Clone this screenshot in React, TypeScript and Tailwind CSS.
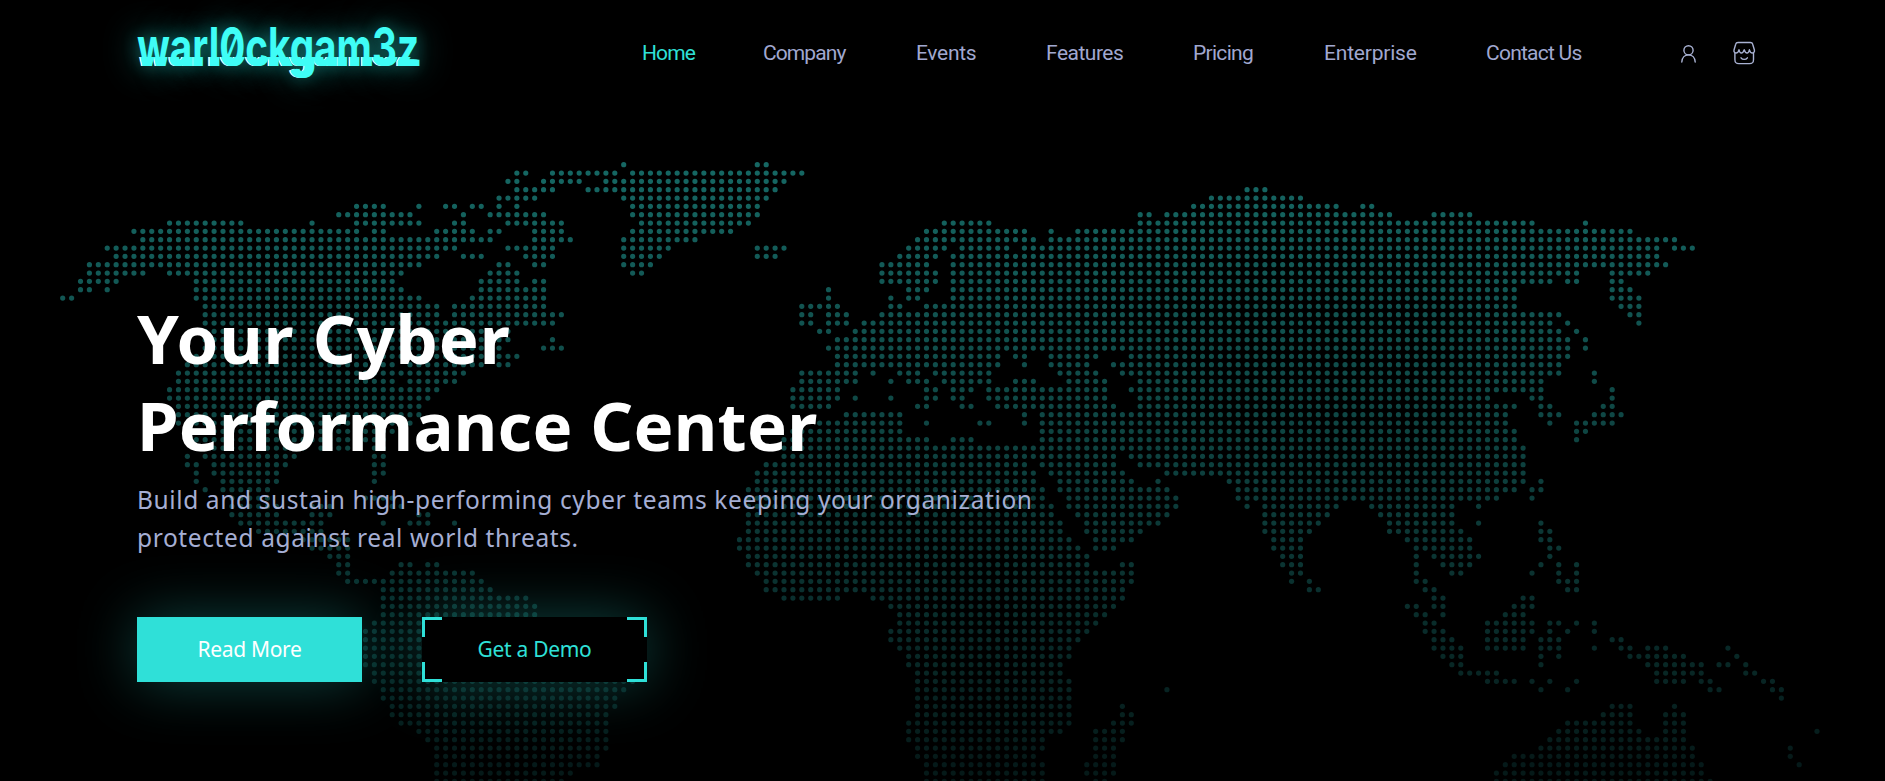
import React from "react";

/* Dotted world map: one entry per row, each a list of column runs. */
const MAP_ROWS: string[] = [
  "63 78-79",
  "51-52 55-62 64-83",
  "50-51 54-58 61-81",
  "51-55 59-80 133-135",
  "49-53 63-79 129-139",
  "33-36 40 43-44 46-47 49 51 64-78 127-143 146-147",
  "31-39 45 48-54 64-78 121-122 124-149 154-158",
  "12-20 28 33-40 44-45 50-56 65-77 99-104 121-165 171",
  "8-33 35-36 42-46 48-49 53-56 64-75 97-108 111 114-176",
  "9-48 53-57 63-71 96-109 111-181",
  "5-44 50-55 63-68 78-81 95-99 101-106 108-179 181-183",
  "6-42 45-47 52-55 63-67 78-80 94-98 100-179",
  "3-40 49-50 53-54 63-66 92-97 100-180",
  "3-9 12-38 48-51 64-65 92-98 100-170 174-178",
  "2-6 15-37 47-51 53-54 92-98 100-167 169-170 174-175",
  "2-3 5 15-38 47-54 86 95-97 100-163 174-176",
  "0-1 15-40 46-54 86 93 95-96 100-163 174-177",
  "16-42 44-54 83-87 93-94 97-163 175-177",
  "16-42 44-56 83-84 86-88 92-168 176-177",
  "16-55 83-84 86-88 90-167 169 177",
  "16-50 85-86 89-168 170",
  "16-50 55 87-169 171",
  "16-49 54-56 86-169 171",
  "15-47 49-51 87-105 107-108 111-116 120-169",
  "14-37 39-47 49-50 87-105 108 111-115 118-168",
  "13-45 83-89 91 94-96 98-104 112-116 119-168 172",
  "13-37 39-44 83-89 93 95-97 99-104 107-109 113-117 121-166 172",
  "12-42 82-87 97-98 100-102 104-117 120-166 174",
  "12-41 82-87 89 93 97-98 100-101 104-117 121-160 165-166 174",
  "13-40 82-86 96-97 101-102 105-118 121-163 166-167 173-174",
  "13-40 88-94 108 110-162 166-168 172-175",
  "13-39 85-94 97 103-104 108 110-162 167 170-174",
  "15-37 82-94 110-163 170-171",
  "15-36 81-97 100-102 110-163 170",
  "15-27 29-32 35-36 81-164",
  "14 16-26 35-36 81-118 120-164",
  "14-15 17-25 35-36 79-108 110-118 121-164",
  "15 17-24 35-36 78-109 111-119 124-164",
  "15 18-24 35 78-109 112-120 123 131-164 166",
  "16 18-23 77-110 112-124 132-163 165-166",
  "19-23 34-37 77-110 113-125 132-161 165",
  "19-24 28-30 37-38 77-111 113-125 133 135-143 147-156 159",
  "19-24 28-30 40-41 77-111 114-124 135-142 148-156",
  "20-29 36 39-41 44 77-112 115-123 135-141 149-156 159 166",
  "22-29 77-112 115-121 135-140 149-157 166-167",
  "27-32 76-113 116-120 136-139 151-158 166-167",
  "28-32 76-114 116-118 136-139 152-158 167-168",
  "30-32 77-115 137-139 152 154-159 167",
  "31-32 38-39 41-42 77-115 119-120 137-139 152 155-158 166 168 170",
  "31-32 37-46 78-120 138-139 152 156-157 165 168 170",
  "32-47 79-120 138 140 152-153 168-170",
  "36-48 79-119 140-141 153-154 169-170",
  "36-52 81-87 91-119 154-155 164-165",
  "36-53 93-118 151-152 154-155 163-165",
  "36-53 94-117 152-153 155 162-164",
  "35-57 94-116 153-154 160-165 167-168 170 172",
  "34-60 93-115 153-155 160-165 167 169 172",
  "34-62 93-114 154-156 160-164 166-168 174-175",
  "34-64 94-113 154-157 160-164 166-168 172 175-176 178-180 187",
  "34-64 95-113 155-157 166 168 176-182 188",
  "34-64 95-112 156-157 166 178-184 186-187 189",
  "35-64 96-112 157-161 179-184 189-190",
  "35-64 96-113 160-163 165 167 170 179-182 184-185 191-192",
  "36-63 96-113 124 166 169 185-186 192-193",
  "36-62 96-113 193",
  "37-62 96-113 119 174-176 181",
  "37-61 96-113 119-120 173-176 180-182",
  "38-61 95-113 118-120 169-176 180-182",
  "40-61 95-112 116-119 168-177 180-182 197",
  "41-61 95-110 116-119 167-182",
  "42-61 96-110 116-118 166-183 194",
  "42-60 96-109 116-118 163-183 194",
  "42-60 97-110 115-118 162-184 195",
  "42-57 97-110 115-118 161-184",
  "42-56 97-110 116-117 161-185",
];

const STEP_X = 8.905;
const STEP_Y = 8.3333;

function WorldMap() {
  return (
    <svg
      className="pointer-events-none absolute inset-0"
      width="1885"
      height="781"
      viewBox="0 0 1885 781"
      aria-hidden="true"
    >
      <g
        stroke="#2fe0d8"
        strokeWidth="5.2"
        strokeLinecap="round"
        strokeDasharray={`0 ${STEP_X}`}
      >
        {MAP_ROWS.map((row, r) =>
          row.split(" ").map((run) => {
            const [a, b = a] = run.split("-").map(Number);
            const y = 164.7 + r * STEP_Y;
            return (
              <line
                key={`${r}-${a}`}
                x1={62.7 + a * STEP_X}
                x2={62.7 + b * STEP_X + 0.4}
                y1={y}
                y2={y}
                strokeOpacity={0.46 - r * 0.0048}
              />
            );
          }),
        )}
      </g>
    </svg>
  );
}

const LOGO = "warl0ckgam3z";

function Logo() {
  return (
    <a
      href="#"
      aria-label={LOGO}
      className="relative block h-[66px] w-[283px] origin-left scale-x-[0.717] whitespace-nowrap font-['Inter',sans-serif] text-[54px] leading-[65px] font-bold text-[#3ffdf6] [font-feature-settings:'zero'] [text-shadow:0_0_20px_rgba(47,224,216,0.45),0_0_44px_rgba(47,224,216,0.55)]"
    >
      <span>{LOGO}</span>
      <span
        aria-hidden="true"
        className="absolute top-0 -left-[4px] text-white [clip-path:inset(43px_0_0_0)] [text-shadow:none]"
      >
        {LOGO}
      </span>
      <span
        aria-hidden="true"
        className="absolute top-0 -left-[2.5px] [clip-path:inset(43px_-10px_0_0)] [text-shadow:2px_0_0_#3ffdf6,4px_0_0_#3ffdf6,6px_0_0_#3ffdf6]"
      >
        {LOGO}
      </span>
    </a>
  );
}

const NAV = [
  { label: "Home", box: "w-[121px] tracking-[-0.9px] text-[#2fe0d8]" },
  { label: "Company", box: "w-[153px] tracking-[-0.9px] text-[#a0a8d0]" },
  { label: "Events", box: "w-[130px] tracking-[-0.3px] text-[#a0a8d0]" },
  { label: "Features", box: "w-[147px] tracking-[-0.5px] text-[#a0a8d0]" },
  { label: "Pricing", box: "w-[131px] tracking-[-0.7px] text-[#a0a8d0]" },
  { label: "Enterprise", box: "w-[162px] tracking-[-0.2px] text-[#a0a8d0]" },
  { label: "Contact Us", box: "w-[194px] tracking-[-0.75px] text-[#a0a8d0]" },
];

function UserIcon() {
  return (
    <svg width="18" height="19" viewBox="0 0 18 19" fill="none" stroke="#a9b2d3" strokeWidth="1.4">
      <circle cx="8.500" cy="6.300" r="4.600" />
      <path d="M1.800 18c.3-4.300 3-7.100 6.700-7.100s6.400 2.800 6.700 7.100" strokeLinecap="round" />
    </svg>
  );
}

function StoreIcon() {
  return (
    <svg width="23" height="24" viewBox="0 0 23 24" fill="none" stroke="#a9b2d3" strokeWidth="1.4" strokeLinecap="round" strokeLinejoin="round">
      <path d="M5 1.500h12.400c1.300 0 2 .5 2.300 1.700L21.400 9c.3 1.800-.6 3-1.900 3-1.600 0-2.600-1.200-3.100-3.200-.5 2-1.100 3.200-2.300 3.200s-2.300-1.200-2.900-3.200C10.600 10.800 9.500 12 8.300 12S6.500 10.800 6 8.800C5.500 10.800 4.500 12 2.900 12 1.600 12 .7 10.800 1 9l1.700-5.800C3 2 3.700 1.500 5 1.500Z" />
      <path d="M1.900 12v6.500c0 3 .8 4.100 4 4.100h10.600c3.200 0 4-1.100 4-4.100V12" />
      <path d="M8 16.800c1.500 2.100 4.900 2.100 6.400 0" />
    </svg>
  );
}

export default function App() {
  return (
    <div className="relative h-[781px] w-full overflow-hidden bg-black">
      <WorldMap />
      <div className="relative flex flex-col pl-[137px]">
        <header className="flex h-[106px] items-center">
          <div className="-mt-[12px] w-[505px] shrink-0">
            <Logo />
          </div>
          <nav className="flex shrink-0 font-['Roboto',sans-serif] text-[21px] leading-[26px] font-normal">
            {NAV.map((item) => (
              <a key={item.label} href="#" className={`shrink-0 ${item.box}`}>
                {item.label}
              </a>
            ))}
          </nav>
          <div className="flex shrink-0 items-center gap-[35px]">
            <UserIcon />
            <StoreIcon />
          </div>
        </header>

        <main className="pt-[189px]">
          <h1 className="font-['Noto_Sans',sans-serif] text-[67px] leading-[87px] font-bold whitespace-nowrap text-white">
            <span className="block tracking-[0.85px]">Your Cyber</span>
            <span className="block tracking-[0.25px]">Performance Center</span>
          </h1>
          <p className="mt-[12px] font-['Noto_Sans',sans-serif] text-[24.5px] leading-[38px] tracking-[0.61px] whitespace-nowrap text-[#a5aed3]">
            Build and sustain high-performing cyber teams keeping your organization
            <br />
            protected against real world threats.
          </p>
          <div className="mt-[60px] flex gap-[60px] font-['Noto_Sans',sans-serif] text-[21px] leading-[65px] tracking-[-0.3px]">
            <a
              href="#"
              className="block h-[65px] w-[225px] bg-[#2fe0d8] text-center text-white shadow-[0_0_60px_rgba(47,224,216,0.3)]"
            >
              Read More
            </a>
            <a
              href="#"
              className="relative block h-[65px] w-[225px] bg-black text-center text-[#2fe0d8] shadow-[0_0_60px_rgba(47,224,216,0.3)]"
            >
              Get a Demo
              <span className="absolute top-0 left-0 size-5 border-t-3 border-l-3 border-[#2fe0d8]" />
              <span className="absolute top-0 right-0 size-5 border-t-3 border-r-3 border-[#2fe0d8]" />
              <span className="absolute bottom-0 left-0 size-5 border-b-3 border-l-3 border-[#2fe0d8]" />
              <span className="absolute right-0 bottom-0 size-5 border-r-3 border-b-3 border-[#2fe0d8]" />
            </a>
          </div>
        </main>
      </div>
    </div>
  );
}
